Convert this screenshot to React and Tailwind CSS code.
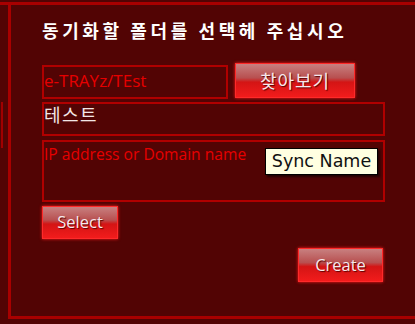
import React from 'react'

const korean = { fontFamily: '"Noto Sans CJK KR", "Noto Sans", sans-serif' }
const latin = { fontFamily: '"Open Sans", "DejaVu Sans", sans-serif' }

function GlossButton({ label, className, font, textClass }) {
  return (
    <button
      type="button"
      style={font}
      className={`flex items-center justify-center border border-[#ff2a2a] bg-[linear-gradient(to_bottom,#c88080_0%,#b85050_42%,#d41414_55%,#f21c1c_100%)] text-[#f6e8ec] shadow-[0_0_3px_#ff1a1a] [text-shadow:1px_1px_1px_#5a0000] ${textClass} ${className}`}
    >
      {label}
    </button>
  )
}

export default function App() {
  return (
    <div className="h-[324px] w-[415px] overflow-hidden bg-[#520404] pt-[2px]">
      <div className="border-t-[3px] border-[#a80000]">
        <div className="flex">
          <div className="w-[8px] pt-[97px]">
            <div className="ml-[1px] h-[46px] w-[2px] bg-[#a00000]" />
          </div>
          <div className="h-[314px] flex-1 border-b-[3px] border-l-[3px] border-[#a80000] pl-[31px] pt-[13px]">
            <h1
              style={korean}
              className="h-[24px] text-[18px] leading-[24px] font-bold tracking-[3.6px] text-white"
            >
              동기화할 폴더를 선택헤 주십시오
            </h1>

            <div className="mt-[21px] flex items-start gap-[7px]">
              <div
                style={latin}
                className="mt-[2px] h-[34px] w-[186px] border-2 border-[#b00000] text-[17px] leading-[28px] text-[#e60000]"
              >
                e-TRAYz/TEst
              </div>
              <GlossButton
                label="찾아보기"
                font={korean}
                textClass="text-[18px] tracking-[1px]"
                className="h-[35px] w-[120px]"
              />
            </div>

            <div
              style={korean}
              className="mt-[3px] h-[34px] w-[343px] border-2 border-[#b00000] text-[18px] leading-[20px] tracking-[1.5px] text-[#f2e6e6]"
            >
              테스트
            </div>

            <div className="relative mt-[4px] h-[62px] w-[343px] border-2 border-[#b00000]">
              <div
                style={latin}
                className="pt-[2px] text-[15.6px] leading-[20px] text-[#e60000]"
              >
                IP address or Domain name
              </div>
              <div
                style={{ fontFamily: '"DejaVu Sans", sans-serif' }}
                className="absolute left-[221px] top-[6px] flex h-[27px] w-[113px] items-center justify-center border border-black bg-[#ffffe1] text-[17.5px] text-[#111] shadow-[2px_2px_2px_rgba(0,0,0,0.6)]"
              >
                Sync Name
              </div>
            </div>

            <GlossButton
              label="Select"
              font={latin}
              textClass="text-[16.5px]"
              className="mt-[4px] h-[33px] w-[76px]"
            />

            <GlossButton
              label="Create"
              font={latin}
              textClass="text-[16.5px]"
              className="ml-[256px] mt-[9px] h-[34px] w-[85px]"
            />
          </div>
        </div>
      </div>
    </div>
  )
}
